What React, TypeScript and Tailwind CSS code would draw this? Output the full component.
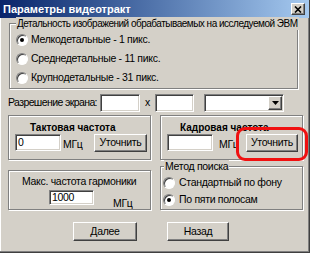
import React from "react";

const sunken =
  "bg-white border border-t-[#808080] border-l-[#808080] border-r-white border-b-white shadow-[inset_1px_1px_0_#404040,inset_-1px_-1px_0_#d4d0c8]";
const raised =
  "bg-[#d4d0c8] border border-t-white border-l-white border-r-[#404040] border-b-[#404040] shadow-[inset_-1px_-1px_0_#808080]";
const etched = "border border-[#808080] shadow-[inset_1px_1px_0_#ffffff,1px_1px_0_#ffffff]";

function Radio({ checked }: { checked?: boolean }) {
  return (
    <div className="w-[12px] h-[12px] rounded-full bg-white border border-t-[#808080] border-l-[#808080] border-r-white border-b-white shadow-[inset_1px_1px_0_#404040] flex items-center justify-center shrink-0">
      {checked && <div className="w-[4px] h-[4px] rounded-full bg-black" />}
    </div>
  );
}

function Button({ label, className }: { label: string; className: string }) {
  return <div className={`${raised} ${className} flex items-center justify-center`}>{label}</div>;
}

export default function App() {
  return (
    <div className="w-[310px] h-[253px] bg-[#d4d0c8] font-['Liberation_Sans',Arial,sans-serif] text-[10.5px] tracking-[-0.3px] text-black overflow-hidden border-r border-b border-r-[#404040] border-b-[#404040] shadow-[inset_-1px_-1px_0_#808080,inset_1px_1px_0_#ffffff]">
      {/* title bar */}
      <div className="h-[18px] bg-linear-to-r from-[#0a246a] to-[#a6caf0] flex items-center pl-[3px] pr-[4px]">
        <span className="text-white font-bold text-[11px] tracking-normal leading-[14px]">Параметры видеотракт</span>
        <div className={`${raised} ml-auto w-[14px] h-[12px] flex items-center justify-center`}>
          <svg width="8" height="7" viewBox="0 0 8 7">
            <path d="M1 0.5 L7 6.5 M7 0.5 L1 6.5" stroke="#000" strokeWidth="1.6" />
          </svg>
        </div>
      </div>

      <div className="pl-[8px]">
        {/* group 1 */}
        <div className={`${etched} relative mt-[5px] ml-[1px] w-[289px] h-[66px]`}>
          <span className="absolute left-[6px] -top-[7px] px-[1px] bg-[#d4d0c8] text-[10px] tracking-[-0.5px] leading-[13px] whitespace-nowrap">
            Детальность изображений обрабатываемых на исследуемой ЭВМ
          </span>
          <div className="pt-[6px] pl-[6px] flex flex-col">
            <div className="h-[19px] flex items-center gap-[3px]">
              <Radio checked />
              <span>Мелкодетальные - 1 пикс.</span>
            </div>
            <div className="h-[19px] flex items-center gap-[3px]">
              <Radio />
              <span>Среднедетальные - 11 пикс.</span>
            </div>
            <div className="h-[19px] flex items-center gap-[3px]">
              <Radio />
              <span>Крупнодетальные - 31 пикс.</span>
            </div>
          </div>
        </div>

        {/* resolution row */}
        <div className="mt-[5px] h-[18px] flex items-center">
          <span className="w-[92px] whitespace-nowrap tracking-[-0.6px]">Разрешение экрана:</span>
          <div className={`${sunken} w-[40px] h-[18px]`} />
          <span className="w-[15px] text-center">x</span>
          <div className={`${sunken} w-[39px] h-[18px]`} />
          <div className={`${sunken} ml-[10px] w-[80px] h-[18px] flex justify-end p-[1px]`}>
            <div className={`${raised} w-[14px] h-full flex items-center justify-center`}>
              <svg width="7" height="4" viewBox="0 0 7 4">
                <path d="M0 0 H7 L3.5 4 Z" fill="#000" />
              </svg>
            </div>
          </div>
        </div>

        {/* columns */}
        <div className="mt-[3px] flex gap-[9px]">
          <div className="w-[143px] flex flex-col">
            <div className={`${etched} h-[45px] pt-[6px]`}>
              <div className="pl-[21px] font-bold text-[10px] tracking-normal leading-[12px]">Тактовая частота</div>
              <div className="flex items-start pl-[6px]">
                <div className={`${sunken} w-[46px] h-[17px] px-[2px] leading-[14px]`}>0</div>
                <span className="w-[33px] pl-[2px] mt-[4px] leading-[13px]">МГц</span>
                <Button label="Уточнить" className="w-[53px] h-[18px]" />
              </div>
            </div>
            <div className={`${etched} mt-[10px] h-[40px] pt-[4px]`}>
              <div className="pl-[13px] leading-[13px]">Макс. частота гармоники</div>
              <div className="flex items-start pl-[40px] mt-[2px]">
                <div className={`${sunken} w-[45px] h-[15px] px-[2px] leading-[12px]`}>1000</div>
                <span className="ml-[19px] mt-[7px] leading-[13px]">МГц</span>
              </div>
            </div>
          </div>

          <div className="w-[143px] flex flex-col">
            <div className={`${etched} relative h-[45px] pt-[6px]`}>
              <div className="pl-[19px] font-bold text-[10px] tracking-normal leading-[12px]">Кадровая частота</div>
              <div className="flex items-start pl-[6px]">
                <div className={`${sunken} w-[46px] h-[17px]`} />
                <span className="w-[33px] pl-[6px] mt-[4px] leading-[13px]">МГц</span>
                <Button label="Уточнить" className="w-[52px] h-[18px]" />
              </div>
              <div className="absolute left-[75px] top-[11px] w-[72px] h-[34px] border-[3px] border-[#f01010] rounded-[9px]" />
            </div>
            <div className={`${etched} relative mt-[6px] h-[44px] pt-[7px] pl-[2px]`}>
              <span className="absolute left-[3px] -top-[7px] px-[1px] bg-[#d4d0c8] leading-[13px] whitespace-nowrap">
                Метод поиска
              </span>
              <div className="h-[17px] flex items-center gap-[4px]">
                <Radio />
                <span>Стандартный по фону</span>
              </div>
              <div className="h-[17px] flex items-center gap-[4px]">
                <Radio checked />
                <span>По пяти полосам</span>
              </div>
            </div>
          </div>
        </div>

        {/* bottom buttons */}
        <div className="mt-[12px] flex pl-[65px] gap-[30px]">
          <Button label="Далее" className="w-[64px] h-[19px]" />
          <Button label="Назад" className="w-[62px] h-[19px]" />
        </div>
      </div>
    </div>
  );
}
